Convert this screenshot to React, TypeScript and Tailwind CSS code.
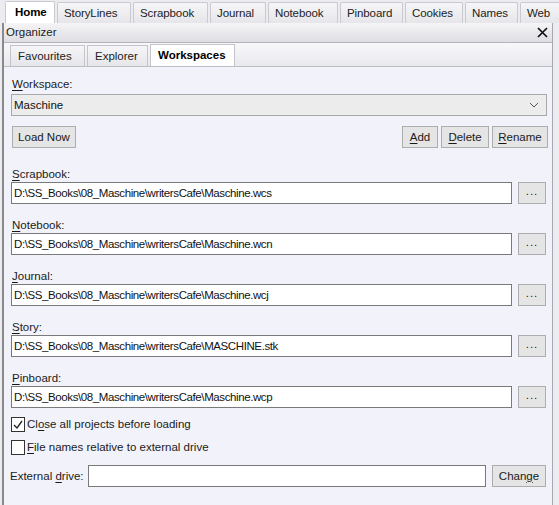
import React from 'react'

const font = { fontFamily: '"Liberation Sans", Arial, sans-serif' }

const topTabs = [
  { label: 'Home', w: 'w-[50px]' },
  { label: 'StoryLines', w: 'w-[74px]' },
  { label: 'Scrapbook', w: 'w-[75px]' },
  { label: 'Journal', w: 'w-[56px]' },
  { label: 'Notebook', w: 'w-[70px]' },
  { label: 'Pinboard', w: 'w-[63px]' },
  { label: 'Cookies', w: 'w-[58px]' },
  { label: 'Names', w: 'w-[53px]' },
  { label: 'Web', w: 'w-[44px]' },
]

const innerTabs = [
  { label: 'Favourites', w: 'w-[75px]' },
  { label: 'Explorer', w: 'w-[61px]' },
  { label: 'Workspaces', w: 'w-[85px]' },
]

// label with one underlined access key
const Key = ({ text, at }: { text: string; at: number }) => (
  <>
    {text.slice(0, at)}
    <span className="underline underline-offset-2">{text[at]}</span>
    {text.slice(at + 1)}
  </>
)

const Button = ({ children, className }: { children: React.ReactNode; className?: string }) => (
  <div
    className={
      'flex h-[22px] items-center justify-center border border-[#adadad] bg-[#e5e5e5] text-[11.5px] text-[#1a1a1a] ' +
      (className ?? '')
    }
  >
    {children}
  </div>
)

const PathField = ({ label, at, value, mt }: { label: string; at: number; value: string; mt: string }) => (
  <div className={'flex flex-col ' + mt}>
    <div className="h-[14px] pl-[12px] text-[11.5px] leading-[14px] text-[#1a1a1a]">
      <Key text={label} at={at} />
    </div>
    <div className="mt-[1px] flex items-center">
      <div className="ml-[11px] flex h-[22px] w-[501px] items-center border border-[#7a7a7a] bg-white pl-[2px] text-[11.5px] tracking-[-0.4px] text-[#111]">
        {value}
      </div>
      <Button className="ml-[6px] w-[28px] pb-[4px] tracking-[1px]">...</Button>
    </div>
  </div>
)

const Check = ({ checked }: { checked?: boolean }) => (
  <div className="flex h-[15px] w-[14px] items-center justify-center border border-[#333] bg-white">
    {checked && (
      <svg width="10" height="10" viewBox="0 0 10 10">
        <path d="M1 5 L4 8 L9 1" fill="none" stroke="#222" strokeWidth="1.3" />
      </svg>
    )}
  </div>
)

export default function App() {
  return (
    <div className="flex h-[505px] w-[559px] flex-col overflow-hidden bg-[#ececf0] leading-[15px]" style={font}>
      {/* main tabs */}
      <div className="flex h-[23px] items-end bg-[#ececf0] pl-[5px]">
        {topTabs.map((t, i) => (
          <div
            key={t.label}
            className={
              t.w +
              ' mr-[2px] flex h-[21px] shrink-0 items-center rounded-t-[2px] border border-b-0 border-[#c9c9cf] text-[11.5px] tracking-[-0.1px] ' +
              (i === 0
                ? 'h-[22px] bg-white pl-[9px] font-bold text-black'
                : 'bg-gradient-to-b from-[#f6f6f8] to-[#e6e6ea] pl-[6px] text-[#222]')
            }
          >
            {t.label}
          </div>
        ))}
      </div>

      <div className="flex flex-1">
        <div className="w-[2px] bg-[#ececf0]" />
        <div className="w-[2px] bg-[#8a8a8a]" />
        <div className="flex w-[549px] flex-col border-r border-[#a8a8b0]">
          {/* organizer caption */}
          <div className="flex h-[20px] items-center justify-between border-b border-[#b4b4ba] bg-gradient-to-b from-[#f5f5f7] to-[#dedee3] pl-[2px] pr-[4px] text-[11.5px] text-[#222]">
            <span>Organizer</span>
            <svg width="11" height="11" viewBox="0 0 11 11">
              <path d="M1 1 L10 10 M10 1 L1 10" stroke="#111" strokeWidth="1.7" />
            </svg>
          </div>

          {/* inner tabs */}
          <div className="flex h-[24px] items-end border-b border-[#bdbdc4] bg-gradient-to-b from-[#f8f8fa] to-[#e9e9ee] pl-[6px]">
            {innerTabs.map((t, i) => (
              <div
                key={t.label}
                className={
                  t.w +
                  ' mr-[2px] flex h-[21px] shrink-0 items-center border border-b-0 border-[#c4c4ca] pl-[7px] text-[11.5px] ' +
                  (i === 2
                    ? 'h-[22px] bg-white font-bold text-black'
                    : 'bg-gradient-to-b from-[#f6f6f8] to-[#e6e6ea] text-[#222]')
                }
              >
                {t.label}
              </div>
            ))}
          </div>

          {/* content */}
          <div className="flex flex-1 flex-col bg-[#f2f3fa] pr-[4px]">
            <div className="mt-[10px] h-[14px] pl-[8px] text-[11.5px] leading-[14px] text-[#1a1a1a]">
              <Key text="Workspace:" at={0} />
            </div>
            <div className="ml-[7px] mt-[3px] flex h-[22px] w-[536px] items-center justify-between border border-[#a8a8a8] bg-[#ececec] pl-[2px] pr-[7px] text-[11.5px] text-[#111]">
              <span>Maschine</span>
              <svg width="10" height="6" viewBox="0 0 10 6">
                <path d="M1 1 L5 5 L9 1" fill="none" stroke="#555" strokeWidth="1" />
              </svg>
            </div>

            <div className="mt-[10px] flex items-center pl-[8px]">
              <Button className="w-[64px]">Load Now</Button>
              <div className="flex-1" />
              <Button className="w-[36px]">
                <Key text="Add" at={0} />
              </Button>
              <Button className="ml-[3px] w-[48px]">
                <Key text="Delete" at={0} />
              </Button>
              <Button className="ml-[3px] w-[56px]">
                <Key text="Rename" at={0} />
              </Button>
            </div>

            <div className="-ml-[4px]">
              <PathField mt="mt-[19px]" label="Scrapbook:" at={0} value="D:\SS_Books\08_Maschine\writersCafe\Maschine.wcs" />
              <PathField mt="mt-[14px]" label="Notebook:" at={0} value="D:\SS_Books\08_Maschine\writersCafe\Maschine.wcn" />
              <PathField mt="mt-[14px]" label="Journal:" at={0} value="D:\SS_Books\08_Maschine\writersCafe\Maschine.wcj" />
              <PathField mt="mt-[14px]" label="Story:" at={0} value="D:\SS_Books\08_Maschine\writersCafe\MASCHINE.stk" />
              <PathField mt="mt-[14px]" label="Pinboard:" at={0} value="D:\SS_Books\08_Maschine\writersCafe\Maschine.wcp" />

              <div className="ml-[11px] mt-[9px] flex h-[15px] items-center text-[11.5px] text-[#1a1a1a]">
                <Check checked />
                <span className="ml-[2px]">
                  <Key text="Close all projects before loading" at={2} />
                </span>
              </div>
              <div className="ml-[11px] mt-[8px] flex h-[15px] items-center text-[11.5px] text-[#1a1a1a]">
                <Check />
                <span className="ml-[2px]">
                  <Key text="File names relative to external drive" at={0} />
                </span>
              </div>

              <div className="mt-[10px] flex items-center text-[11.5px] text-[#1a1a1a]">
                <span className="ml-[10px] w-[78px]">
                  <Key text="External drive:" at={9} />
                </span>
                <div className="h-[22px] w-[398px] border border-[#7a7a7a] bg-white" />
                <Button className="ml-[6px] w-[54px]">
                  <Key text="Change" at={4} />
                </Button>
              </div>
            </div>
          </div>
        </div>
        <div className="flex-1 bg-[#ececf0]" />
      </div>
    </div>
  )
}
